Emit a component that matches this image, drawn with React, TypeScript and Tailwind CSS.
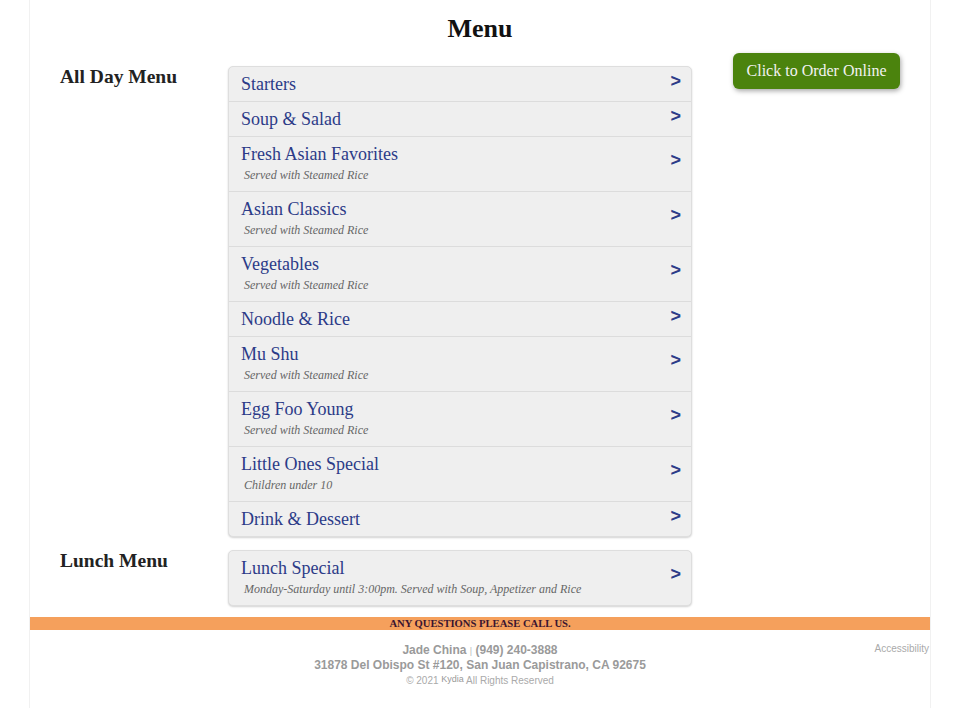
import React from 'react';

type MenuItem = { name: string; note?: string };

const allDay: MenuItem[] = [
  { name: 'Starters' },
  { name: 'Soup & Salad' },
  { name: 'Fresh Asian Favorites', note: 'Served with Steamed Rice' },
  { name: 'Asian Classics', note: 'Served with Steamed Rice' },
  { name: 'Vegetables', note: 'Served with Steamed Rice' },
  { name: 'Noodle & Rice' },
  { name: 'Mu Shu', note: 'Served with Steamed Rice' },
  { name: 'Egg Foo Young', note: 'Served with Steamed Rice' },
  { name: 'Little Ones Special', note: 'Children under 10' },
  { name: 'Drink & Dessert' },
];

const lunch: MenuItem[] = [
  { name: 'Lunch Special', note: 'Monday-Saturday until 3:00pm. Served with Soup, Appetizer and Rice' },
];

function MenuList({ items }: { items: MenuItem[] }) {
  return (
    <div className="w-[464px] rounded-[5px] border border-[#dedede] bg-[#efefef] shadow-[0_1px_2px_rgba(0,0,0,0.18)] overflow-hidden">
      {items.map((item, i) => (
        <div
          key={item.name}
          className={`flex items-center pl-[12px] pr-[10px] pt-[7px] ${item.note ? 'pb-[9px]' : 'pb-[7px]'} ${i < items.length - 1 ? 'border-b border-[#dcdcdc]' : ''}`}
        >
          <div className="flex-1">
            <div className="text-[18px] leading-[20px] text-[#2c3b88]">{item.name}</div>
            {item.note && (
              <div className="mt-[4px] pl-[3px] text-[12px] leading-[14px] italic text-[#666]">{item.note}</div>
            )}
          </div>
          <span className="-mt-[6px] font-['Liberation_Sans',sans-serif] text-[18px] font-bold leading-[20px] text-[#2c3b88]">&gt;</span>
        </div>
      ))}
    </div>
  );
}

export default function App() {
  return (
    <div className="min-h-screen bg-white font-['Liberation_Serif',serif]">
      <div className="mx-[29px] min-h-screen border-x border-[#f1f1f1]">
        <h1 className="pt-[13px] text-center text-[26px] font-bold leading-[32px] text-[#111]">Menu</h1>

        <div className="mt-[21px] flex items-start">
          <div className="w-[198px] pl-[30px] text-[19.5px] font-bold leading-[22px] text-[#222]">All Day Menu</div>
          <MenuList items={allDay} />
          <div className="-mt-[13px] ml-[41px]">
            <button className="h-[36px] w-[167px] rounded-[6px] bg-[#4b830d] text-[16px] text-[#f2f2f2] shadow-[1px_2px_5px_rgba(0,0,0,0.35)]">
              Click to Order Online
            </button>
          </div>
        </div>

        <div className="mt-[13px] flex items-start">
          <div className="w-[198px] pl-[30px] text-[19.5px] font-bold leading-[22px] text-[#222]">Lunch Menu</div>
          <MenuList items={lunch} />
        </div>

        <div className="mt-[11px] h-[13px] bg-[#f5a05c] text-center text-[10.6px] font-bold leading-[13px] text-[#3a1530]">
          ANY QUESTIONS PLEASE CALL US.
        </div>

        <div className="grid grid-cols-[1fr_auto_1fr] pt-[13px] font-['Liberation_Sans',sans-serif]">
          <div />
          <div className="text-center">
            <div className="text-[12px] font-bold leading-[14px] text-[#9a9a9a]">
              Jade China <span className="text-[9px] font-normal text-[#bbb]">|</span> (949) 240-3888
            </div>
            <div className="text-[12px] font-bold leading-[14px] text-[#9a9a9a]">
              31878 Del Obispo St #120, San Juan Capistrano, CA 92675
            </div>
            <div className="mt-[2px] text-[10px] leading-[14px] text-[#aaa]">
              © 2021 <span className="relative -top-[2px] text-[9px] text-[#999]">Kydia</span> All Rights Reserved
            </div>
          </div>
          <div className="pr-[1px] text-right text-[10px] leading-[12px] text-[#aaa]">Accessibility</div>
        </div>
      </div>
    </div>
  );
}
